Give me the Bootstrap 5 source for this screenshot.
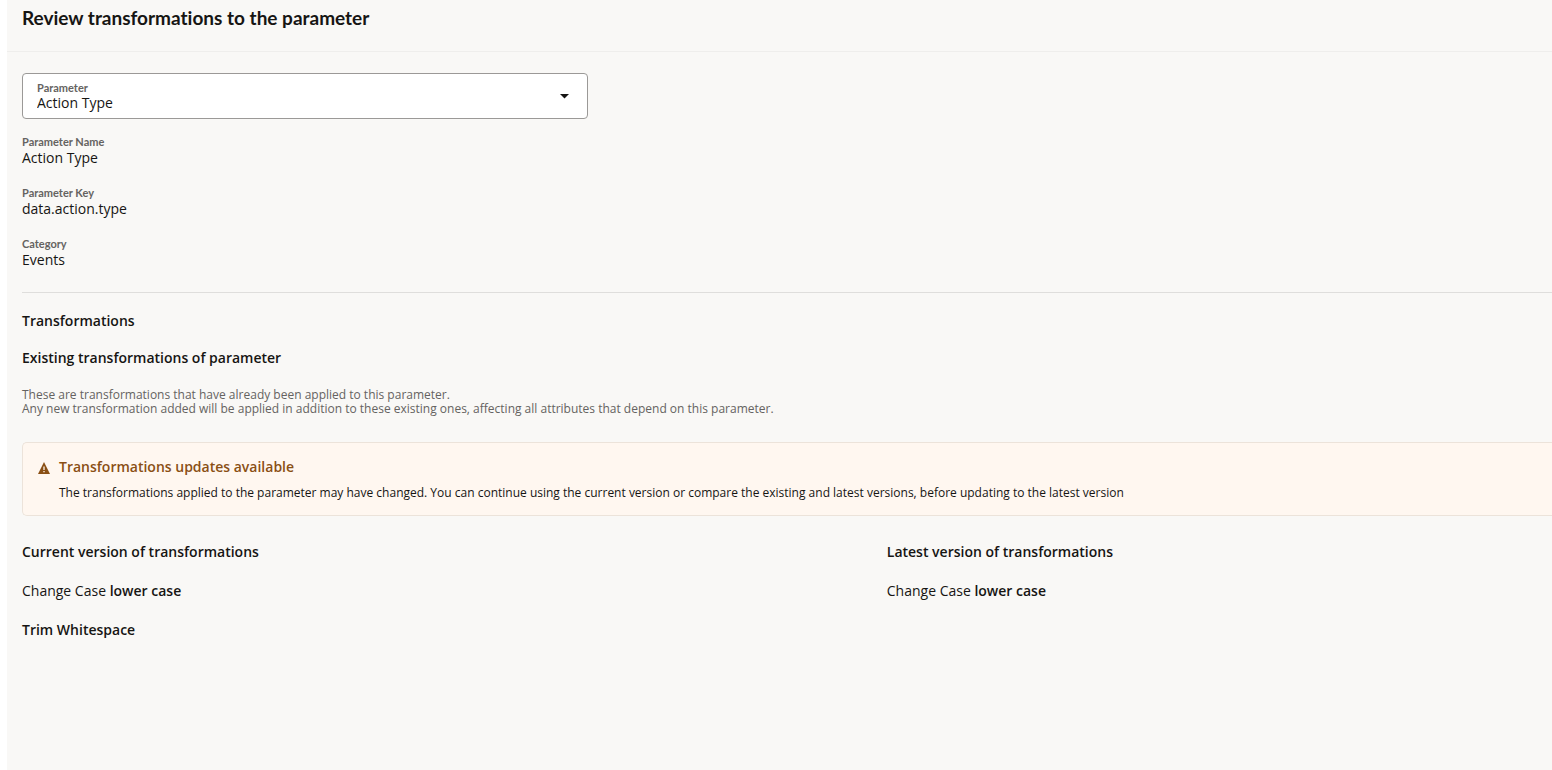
<!DOCTYPE html>
<html lang="en">
<head>
<meta charset="utf-8">
<meta name="viewport" content="width=device-width, initial-scale=1">
<title>Review transformations</title>
<link href="https://cdn.jsdelivr.net/npm/bootstrap@5.3.0/dist/css/bootstrap.min.css" rel="stylesheet">
<style>
  body { font-family: "Open Sans", "Noto Sans", sans-serif; font-size: 14px; line-height: 20px; color: #161513; background: #fff; }
  .panel { margin-left: 7px; background: #f9f8f6; }
  .panel-header { padding: 7px 15px 23px; border-bottom: 1px solid #efeeec; }
  .panel-body { padding: 21px 0 0 15px; }
  h1 { font-family: Lato, "Open Sans", sans-serif; font-size: 19px; line-height: 21px; font-weight: 700; font-variant-ligatures: none; }
  h2, h3 { font-size: 14px; line-height: 20px; font-weight: 600; }
  strong { font-weight: 600; }
  .param-field { width: 37%; margin-bottom: 16px; }
  .param-field label { left: 15px; top: 8px; z-index: 2; pointer-events: none; }
  .param-field .form-select { height: 46px; padding: 14px 40px 0 14px; font-size: 14px; line-height: 20px; color: #161513; border: 1px solid #9b9997; border-radius: 4px; background: #fff; }
  .param-field svg { right: 19px; top: 21px; pointer-events: none; }
  .field-label { font-family: Lato, "Open Sans", sans-serif; font-size: 11px; line-height: 14px; font-weight: 700; color: #656361; }
  .details dd { line-height: 18px; margin-bottom: 19px; }
  .details dd:last-child { margin-bottom: 0; }
  .divider { height: 1px; margin: 23px 0 18px; background: #dfdedc; border: 0; opacity: 1; }
  .hint { font-size: 12px; line-height: 14px; color: #656361; margin-bottom: 26px; }
  .update-alert { padding: 14px 15px 13px; margin-bottom: 26px; background: #fff7f0; border: 1px solid #ece3da; border-right: 0; border-radius: 5px 0 0 5px; }
  .update-alert h3 { color: #8a4f14; margin-bottom: 7px; }
  .update-alert p { font-size: 12px; line-height: 18px; }
  .existing-title { margin-bottom: 17px; }
  .versions { grid-template-columns: 13fr 10fr; }
  .versions h3, .versions p { margin-bottom: 19px; }
</style>
</head>
<body>
<main class="panel min-vh-100">
  <header class="panel-header"><h1 class="mb-0">Review transformations to the parameter</h1></header>
  <div class="panel-body">
    <div class="param-field position-relative">
      <label class="field-label position-absolute" for="parameter">Parameter</label>
      <select class="form-select" id="parameter"><option>Action Type</option></select>
      <svg class="position-absolute" width="9" height="5" viewBox="0 0 9 5" aria-hidden="true"><path d="M0 0h9L4.500 4.500z" fill="#161513"/></svg>
    </div>
    <dl class="details mb-0">
      <dt class="field-label">Parameter Name</dt><dd>Action Type</dd>
      <dt class="field-label">Parameter Key</dt><dd>data.action.type</dd>
      <dt class="field-label">Category</dt><dd>Events</dd>
    </dl>
    <hr class="divider">
    <section>
      <h2 class="existing-title">Transformations</h2>
      <h3 class="mb-3">Existing transformations of parameter</h3>
      <p class="hint pt-1">These are transformations that have already been applied to this parameter.<br>Any new transformation added will be applied in addition to these existing ones, affecting all attributes that depend on this parameter.</p>
      <div class="update-alert d-flex gap-2" role="alert">
        <svg class="flex-shrink-0 mt-1" width="13" height="14" viewBox="0 0 13 14" aria-hidden="true"><path d="M6 1 12 13H0z" fill="#8a4f14"/><path d="M6 5.500v3.500M6 10v1.300" stroke="#fff7f0" stroke-width="1.300"/></svg>
        <div>
          <h3>Transformations updates available</h3>
          <p class="mb-0">The transformations applied to the parameter may have changed. You can continue using the current version or compare the existing and latest versions, before updating to the latest version</p>
        </div>
      </div>
      <div class="versions d-grid">
        <div>
          <h3>Current version of transformations</h3>
          <p>Change Case <strong>lower case</strong></p>
          <p><strong>Trim Whitespace</strong></p>
        </div>
        <div>
          <h3>Latest version of transformations</h3>
          <p>Change Case <strong>lower case</strong></p>
        </div>
      </div>
    </section>
  </div>
</main>
<script src="https://cdn.jsdelivr.net/npm/bootstrap@5.3.0/dist/js/bootstrap.bundle.min.js"></script>
</body>
</html>
